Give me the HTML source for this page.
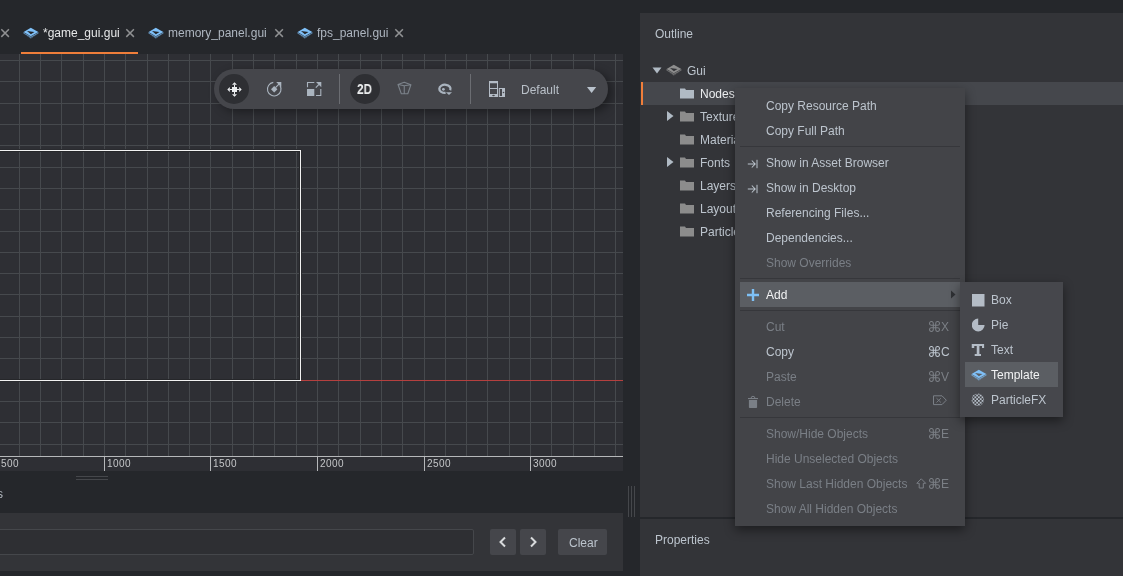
<!DOCTYPE html>
<html><head><meta charset="utf-8">
<style>
*{box-sizing:border-box;margin:0;padding:0}
html,body{width:1123px;height:576px;overflow:hidden;background:#25272b;font-family:"Liberation Sans",sans-serif;}
.a{position:absolute}
.t{position:absolute;white-space:pre;font-size:12px;line-height:14px;will-change:transform}
#canvas{left:0;top:54px;width:623px;height:402px;background:#2e2f34;overflow:hidden}
#ruler{left:0;top:456px;width:623px;height:15px;background:#2e2f34;border-top:1px solid #b6b8ba}
.tick{position:absolute;top:0;width:1px;height:14px;background:#b6b8ba}
.rl{position:absolute;will-change:transform;top:2px;font-size:10px;line-height:10px;color:#c4c6c8;letter-spacing:0.45px}
#rp{left:640px;top:13px;width:483px;height:504px;background:#333438}
#pp{left:640px;top:519px;width:483px;height:57px;background:#333438}
.row{position:absolute;left:0;width:483px;height:23px}
.menu{position:absolute;background:#434448;box-shadow:0 4px 10px rgba(0,0,0,0.45)}
.mi{position:absolute;will-change:transform;left:31px;font-size:12px;line-height:14px;color:#bcc4cd;white-space:pre}
.dis{color:#7a7f86}
.sep{position:absolute;left:5px;width:220px;height:1px;background:#36373b}
.sc{position:absolute;will-change:transform;font-size:12px;line-height:14px;color:#bcc4cd;white-space:pre;text-align:right}
</style></head><body>

<!-- tabs -->
<div class="a" style="left:0;top:0;width:640px;height:54px;background:#25272b"></div>
<svg class="a" style="left:0px;top:28px" width="10" height="10" viewBox="0 0 10 10"><path d="M1.3 1.3L8.9 8.9M8.9 1.3L1.3 8.9" stroke="#8f9092" stroke-width="1.5"/></svg>

<svg class="a" style="left:23px;top:27px" width="16" height="12" viewBox="0 0 16 12"><path d="M7.8 0.7L15.3 5V6.6L7.8 11.5L0.6 6.6V5Z" fill="#7fc0f8"/><path d="M0.6 5.4L7.8 9.6L15.3 5.4M0.9 6.9L7.8 11L15 6.9" stroke="#25272b" stroke-width="0.65" fill="none"/><path d="M4 4.1L11.5 5.1L7.9 7.2Z" fill="#25272b"/></svg>
<div class="t" style="left:43px;top:26px;color:#e6e7e8">*game_gui.gui</div>
<svg class="a" style="left:125px;top:28px" width="10" height="10" viewBox="0 0 10 10"><path d="M1.3 1.3L8.9 8.9M8.9 1.3L1.3 8.9" stroke="#8f9092" stroke-width="1.5"/></svg>
<div class="a" style="left:21px;top:52px;width:117px;height:2px;background:#f07e3a"></div>

<svg class="a" style="left:148px;top:27px" width="16" height="12" viewBox="0 0 16 12"><path d="M7.8 0.7L15.3 5V6.6L7.8 11.5L0.6 6.6V5Z" fill="#7fc0f8"/><path d="M0.6 5.4L7.8 9.6L15.3 5.4M0.9 6.9L7.8 11L15 6.9" stroke="#25272b" stroke-width="0.65" fill="none"/><path d="M4 4.1L11.5 5.1L7.9 7.2Z" fill="#25272b"/></svg>
<div class="t" style="left:168px;top:26px;color:#aeb6c0">memory_panel.gui</div>
<svg class="a" style="left:274px;top:28px" width="10" height="10" viewBox="0 0 10 10"><path d="M1.3 1.3L8.9 8.9M8.9 1.3L1.3 8.9" stroke="#8f9092" stroke-width="1.5"/></svg>

<svg class="a" style="left:297px;top:27px" width="16" height="12" viewBox="0 0 16 12"><path d="M7.8 0.7L15.3 5V6.6L7.8 11.5L0.6 6.6V5Z" fill="#7fc0f8"/><path d="M0.6 5.4L7.8 9.6L15.3 5.4M0.9 6.9L7.8 11L15 6.9" stroke="#25272b" stroke-width="0.65" fill="none"/><path d="M4 4.1L11.5 5.1L7.9 7.2Z" fill="#25272b"/></svg>
<div class="t" style="left:317px;top:26px;color:#aeb6c0">fps_panel.gui</div>
<svg class="a" style="left:394px;top:28px" width="10" height="10" viewBox="0 0 10 10"><path d="M1.3 1.3L8.9 8.9M8.9 1.3L1.3 8.9" stroke="#8f9092" stroke-width="1.5"/></svg>

<!-- canvas -->
<div id="canvas" class="a">
<svg width="623" height="402" style="position:absolute;left:0;top:0" shape-rendering="crispEdges">
<path fill="#46494d" d="M19 0h1v402h-1zM40 0h1v402h-1zM61 0h1v402h-1zM83 0h1v402h-1zM104 0h1v402h-1zM125 0h1v402h-1zM147 0h1v402h-1zM168 0h1v402h-1zM189 0h1v402h-1zM210 0h1v402h-1zM232 0h1v402h-1zM253 0h1v402h-1zM274 0h1v402h-1zM296 0h1v402h-1zM317 0h1v402h-1zM338 0h1v402h-1zM360 0h1v402h-1zM381 0h1v402h-1zM402 0h1v402h-1zM424 0h1v402h-1zM445 0h1v402h-1zM466 0h1v402h-1zM487 0h1v402h-1zM509 0h1v402h-1zM530 0h1v402h-1zM551 0h1v402h-1zM573 0h1v402h-1zM594 0h1v402h-1zM615 0h1v402h-1z"/><path fill="#46494d" d="M0 390h623v1h-623zM0 368h623v1h-623zM0 347h623v1h-623zM0 326h623v1h-623zM0 304h623v1h-623zM0 283h623v1h-623zM0 262h623v1h-623zM0 240h623v1h-623zM0 219h623v1h-623zM0 198h623v1h-623zM0 177h623v1h-623zM0 155h623v1h-623zM0 134h623v1h-623zM0 113h623v1h-623zM0 91h623v1h-623zM0 70h623v1h-623zM0 49h623v1h-623zM0 27h623v1h-623zM0 6h623v1h-623z"/>
<!-- red x axis -->
<!-- white rect with dark outline -->
<path d="M0 95H302V328H0V327H301V96H0Z" fill="#2a2b2f"/>
<path d="M0 97H300V326H0V325H299V98H0Z" fill="#26272a"/>
<rect x="301" y="326" width="322" height="1" fill="#b5403f"/>
<path d="M0 96H301V327H0V326H300V97H0Z" fill="#f2f2f2"/>
</svg>

<!-- toolbar pill -->
<div class="a" style="left:214px;top:15px;width:394px;height:40px;border-radius:20px;background:#45464b;box-shadow:4px 3px 10px rgba(0,0,0,0.38)"></div>
<div class="a" style="left:219px;top:20px;width:30px;height:30px;border-radius:15px;background:#2e2f33"></div>
<svg class="a" style="left:225px;top:26px" width="18" height="18" viewBox="0 0 18 18" fill="#eceef0"><rect x="7" y="7" width="5" height="5"/><path d="M9.5 2.3L12 4.8H7Z M9.5 16.7L12 14.2H7Z M2.3 9.5L4.8 7V12Z M16.7 9.5L14.2 7V12Z"/><rect x="9" y="4.8" width="1" height="2.2"/><rect x="9" y="12" width="1" height="2.2"/><rect x="4.8" y="9" width="2.2" height="1"/><rect x="12" y="9" width="2.2" height="1"/></svg>
<svg class="a" style="left:265px;top:26px" width="18" height="18" viewBox="0 0 18 18"><path d="M8.3 2.4A6.8 6.8 0 1 0 14.9 5.4" stroke="#aab4bf" stroke-width="1.1" fill="none"/><path d="M9.2 5.9L12.4 9.2L9.2 12.4L6 9.2Z" fill="#aab4bf"/><path d="M11.2 2H16.3V7Z" fill="#aab4bf"/><path d="M10.5 7.6L14 4.1" stroke="#aab4bf" stroke-width="1.2"/></svg>
<svg class="a" style="left:305px;top:26px" width="18" height="18" viewBox="0 0 18 18"><rect x="2" y="9" width="7.3" height="7" fill="#aab4bf"/><path d="M2.5 7.3V2.5H9.3M11 15.5H15.8V8.9" stroke="#aab4bf" stroke-width="1.1" fill="none"/><path d="M11 2H16.3V7.2Z" fill="#aab4bf"/><path d="M10.8 7.6L14 4.4" stroke="#aab4bf" stroke-width="1.2"/></svg>
<div class="a" style="left:339px;top:20px;width:1px;height:30px;background:#6b6d72"></div>
<div class="a" style="left:350px;top:20px;width:30px;height:30px;border-radius:15px;background:#2e2f33"></div>
<div class="t" style="left:357px;top:27px;font-size:14px;line-height:16px;font-weight:bold;color:#eceeef;transform:scaleX(0.84);transform-origin:0 0">2D</div>
<svg class="a" style="left:395px;top:26px" width="18" height="18" viewBox="0 0 18 18"><path d="M3 4.5L9.25 2.2L15.9 4.7L12.8 13.7H6.3Z M3 4.5L9.25 5.8L15.9 4.7 M9.25 5.8V13.7" stroke="#7c838b" stroke-width="1.1" fill="none" stroke-linejoin="round"/></svg>
<svg class="a" style="left:435px;top:26px" width="18" height="18" viewBox="0 0 18 18"><path d="M10.6 12.9A5.6 4.1 0 1 1 15.2 10.2" stroke="#aab4bf" stroke-width="2.3" fill="none"/><circle cx="8.4" cy="9.3" r="1.4" fill="#aab4bf"/><path d="M10.9 12.2H17L14 14.9Z" fill="#aab4bf"/></svg>
<div class="a" style="left:470px;top:20px;width:1px;height:30px;background:#6b6d72"></div>
<svg class="a" style="left:488px;top:26px" width="18" height="18" viewBox="0 0 18 18" fill="#b4bcc6"><path fill-rule="evenodd" d="M1 1H10V17H1Z M2 3.3V13.9H9V3.3Z"/><rect x="2" y="8" width="7" height="1"/><ellipse cx="5.5" cy="15.5" rx="1.3" ry="0.7" fill="#45464b"/><path fill-rule="evenodd" d="M10.8 8H17V17H10.8Z M11.8 9V16H14V9Z"/><circle cx="15.5" cy="12.5" r="0.8" fill="#45464b"/></svg>
<div class="t" style="left:521px;top:29px;color:#b9c0c8">Default</div>
<svg class="a" style="left:587px;top:33px" width="10" height="7" viewBox="0 0 10 7"><path d="M0 0H9.2L4.6 6Z" fill="#b9c2cc"/></svg>
</div>

<!-- ruler -->
<div id="ruler" class="a">
<div class="tick" style="left:104px"></div>
<div class="tick" style="left:210px"></div>
<div class="tick" style="left:317px"></div>
<div class="tick" style="left:424px"></div>
<div class="tick" style="left:530px"></div>
<div class="rl" style="left:1px">500</div>
<div class="rl" style="left:107px">1000</div>
<div class="rl" style="left:213px">1500</div>
<div class="rl" style="left:320px">2000</div>
<div class="rl" style="left:427px">2500</div>
<div class="rl" style="left:533px">3000</div>
</div>

<!-- splitter & bottom panel -->
<div class="a" style="left:76px;top:476px;width:32px;height:1px;background:#45474b"></div>
<div class="a" style="left:76px;top:479px;width:32px;height:1px;background:#45474b"></div>
<div class="t" style="left:-9px;top:487px;color:#b4bac1">ss</div>
<div class="a" style="left:0;top:513px;width:623px;height:58px;background:#333438"></div>
<div class="a" style="left:-5px;top:529px;width:479px;height:26px;background:#2e2f33;border:1px solid #45474b;border-radius:2px"></div>
<div class="a" style="left:490px;top:529px;width:26px;height:26px;background:#45464b;border-radius:2px"></div>
<svg class="a" style="left:497px;top:536px" width="12" height="12" viewBox="0 0 12 12"><path d="M8 1.5L3.5 6L8 10.5" stroke="#d8dadc" stroke-width="2" fill="none"/></svg>
<div class="a" style="left:520px;top:529px;width:26px;height:26px;background:#45464b;border-radius:2px"></div>
<svg class="a" style="left:527px;top:536px" width="12" height="12" viewBox="0 0 12 12"><path d="M4 1.5L8.5 6L4 10.5" stroke="#d8dadc" stroke-width="2" fill="none"/></svg>
<div class="a" style="left:558px;top:529px;width:49px;height:26px;background:#45464b;border-radius:2px"></div>
<div class="t" style="left:569px;top:536px;color:#bcc4cd">Clear</div>
<div class="a" style="left:628px;top:486px;width:1px;height:31px;background:#45474b"></div>
<div class="a" style="left:631px;top:486px;width:1px;height:31px;background:#45474b"></div>
<div class="a" style="left:634px;top:486px;width:1px;height:31px;background:#45474b"></div>

<!-- right panel -->
<div id="rp" class="a">
<div class="t" style="left:15px;top:14px;color:#bcc4cd">Outline</div>
<svg class="a" style="left:12px;top:54px" width="10" height="7" viewBox="0 0 10 7"><path d="M0.5 0.5H9.5L5 6.5Z" fill="#b0bac4"/></svg>
<svg class="a" style="left:26px;top:51px" width="16" height="12" viewBox="0 0 16 12"><path d="M7.8 0.7L15.3 5V6.6L7.8 11.5L0.6 6.6V5Z" fill="#8e8e8e"/><path d="M0.6 5.4L7.8 9.6L15.3 5.4M0.9 6.9L7.8 11L15 6.9" stroke="#333438" stroke-width="0.65" fill="none"/><path d="M4 4.1L11.5 5.1L7.9 7.2Z" fill="#333438"/></svg>
<div class="t" style="left:47px;top:51px;color:#bcc4cd">Gui</div>
<div class="a" style="left:1px;top:69px;width:482px;height:23px;background:#45474c"></div>
<div class="a" style="left:1px;top:69px;width:2px;height:23px;background:#f07e3a"></div>
<svg class="a" style="left:40px;top:75px" width="14" height="11" viewBox="0 0 14 11"><path d="M0 0.5H5L6 2H14V10.5H0Z" fill="#b0bac4"/></svg>
<div class="t" style="left:60px;top:74px;color:#eceef0">Nodes</div>
<svg class="a" style="left:40px;top:98px" width="14" height="11" viewBox="0 0 14 11"><path d="M0 0.5H5L6 2H14V10.5H0Z" fill="#8c8c8c"/></svg>
<div class="t" style="left:60px;top:97px;color:#bcc4cd">Textures</div>
<svg class="a" style="left:27px;top:98px" width="7" height="10" viewBox="0 0 7 10"><path d="M0 0L6.5 5L0 10Z" fill="#b0bac4"/></svg>
<svg class="a" style="left:40px;top:121px" width="14" height="11" viewBox="0 0 14 11"><path d="M0 0.5H5L6 2H14V10.5H0Z" fill="#8c8c8c"/></svg>
<div class="t" style="left:60px;top:120px;color:#bcc4cd">Materials</div>
<svg class="a" style="left:40px;top:144px" width="14" height="11" viewBox="0 0 14 11"><path d="M0 0.5H5L6 2H14V10.5H0Z" fill="#8c8c8c"/></svg>
<div class="t" style="left:60px;top:143px;color:#bcc4cd">Fonts</div>
<svg class="a" style="left:27px;top:144px" width="7" height="10" viewBox="0 0 7 10"><path d="M0 0L6.5 5L0 10Z" fill="#b0bac4"/></svg>
<svg class="a" style="left:40px;top:167px" width="14" height="11" viewBox="0 0 14 11"><path d="M0 0.5H5L6 2H14V10.5H0Z" fill="#8c8c8c"/></svg>
<div class="t" style="left:60px;top:166px;color:#bcc4cd">Layers</div>
<svg class="a" style="left:40px;top:190px" width="14" height="11" viewBox="0 0 14 11"><path d="M0 0.5H5L6 2H14V10.5H0Z" fill="#8c8c8c"/></svg>
<div class="t" style="left:60px;top:189px;color:#bcc4cd">Layouts</div>
<svg class="a" style="left:40px;top:213px" width="14" height="11" viewBox="0 0 14 11"><path d="M0 0.5H5L6 2H14V10.5H0Z" fill="#8c8c8c"/></svg>
<div class="t" style="left:60px;top:212px;color:#bcc4cd">Particles</div>
</div>
<div id="pp" class="a">
<div class="t" style="left:15px;top:14px;color:#bcc4cd">Properties</div>
</div>

<div class="menu" style="left:735px;top:88px;width:230px;height:438px">
<div class="mi" style="top:11px">Copy Resource Path</div>
<div class="mi" style="top:36px">Copy Full Path</div>
<div class="sep" style="top:58px"></div>
<div class="mi" style="top:68px">Show in Asset Browser</div>
<svg class="a" style="left:12px;top:71px" width="11" height="10" viewBox="0 0 11 10"><path d="M0.8 5H8M4.8 1.5L8.2 5L4.8 8.5" stroke="#bcc4cd" stroke-width="1.05" fill="none"/><path d="M10 0.8V9.2" stroke="#bcc4cd" stroke-width="1"/></svg>
<div class="mi" style="top:93px">Show in Desktop</div>
<svg class="a" style="left:12px;top:96px" width="11" height="10" viewBox="0 0 11 10"><path d="M0.8 5H8M4.8 1.5L8.2 5L4.8 8.5" stroke="#bcc4cd" stroke-width="1.05" fill="none"/><path d="M10 0.8V9.2" stroke="#bcc4cd" stroke-width="1"/></svg>
<div class="mi" style="top:118px">Referencing Files...</div>
<div class="mi" style="top:143px">Dependencies...</div>
<div class="mi dis" style="top:168px">Show Overrides</div>
<div class="sep" style="top:190px"></div>
<div class="a" style="left:5px;top:194px;width:220px;height:25px;background:#5b5e63"></div>
<svg class="a" style="left:11px;top:200px" width="14" height="14" viewBox="0 0 14 14"><path d="M7 1V13M1 7H13" stroke="#7ec0f5" stroke-width="2.4"/></svg>
<div class="mi" style="top:200px;color:#f2f3f4">Add</div>
<svg class="a" style="left:216px;top:202px" width="5" height="9" viewBox="0 0 5 9"><path d="M0 0.5L4.5 4.5L0 8.5Z" fill="#2e3034"/></svg>
<div class="sep" style="top:222px"></div>
<div class="mi dis" style="top:232px">Cut</div>
<svg class="a" style="left:194px;top:233px" width="11" height="11" viewBox="0 0 11 11"><path d="M4.3 4.3V2.4A1.9 1.9 0 1 0 2.4 4.3H8.6A1.9 1.9 0 1 0 6.7 2.4V8.6A1.9 1.9 0 1 0 8.6 6.7H2.4A1.9 1.9 0 1 0 4.3 8.6Z" stroke="#7b7f85" stroke-width="1.05" fill="none"/></svg><div class="sc" style="left:206px;top:232px;color:#7b7f85">X</div>
<div class="mi" style="top:257px">Copy</div>
<svg class="a" style="left:194px;top:258px" width="11" height="11" viewBox="0 0 11 11"><path d="M4.3 4.3V2.4A1.9 1.9 0 1 0 2.4 4.3H8.6A1.9 1.9 0 1 0 6.7 2.4V8.6A1.9 1.9 0 1 0 8.6 6.7H2.4A1.9 1.9 0 1 0 4.3 8.6Z" stroke="#bcc4cd" stroke-width="1.05" fill="none"/></svg><div class="sc" style="left:206px;top:257px;color:#bcc4cd">C</div>
<div class="mi dis" style="top:282px">Paste</div>
<svg class="a" style="left:194px;top:283px" width="11" height="11" viewBox="0 0 11 11"><path d="M4.3 4.3V2.4A1.9 1.9 0 1 0 2.4 4.3H8.6A1.9 1.9 0 1 0 6.7 2.4V8.6A1.9 1.9 0 1 0 8.6 6.7H2.4A1.9 1.9 0 1 0 4.3 8.6Z" stroke="#7b7f85" stroke-width="1.05" fill="none"/></svg><div class="sc" style="left:206px;top:282px;color:#7b7f85">V</div>
<div class="mi dis" style="top:307px">Delete</div>
<svg class="a" style="left:13px;top:307px" width="11" height="14" viewBox="0 0 11 14"><path d="M0 3H10V4.1H0Z" fill="#7a7f86"/><path d="M3.1 3.2A1.9 1.9 0 0 1 6.9 3.2" stroke="#7a7f86" stroke-width="1" fill="none"/><path d="M0.9 5H9.1V12.2Q9.1 13 8.3 13H1.7Q0.9 13 0.9 12.2Z" fill="#7a7f86"/></svg>
<svg class="a" style="left:197px;top:396px;top:307px" width="15" height="11" viewBox="0 0 15 11"><path d="M1.5 0.8H10L14.3 5.2L10 9.6H1.5Z" stroke="#7a7f86" stroke-width="1" fill="none"/><path d="M4.5 3.2L8.9 7.5M8.9 3.2L4.5 7.5" stroke="#7a7f86" stroke-width="0.9"/></svg>
<div class="sep" style="top:329px"></div>
<div class="mi dis" style="top:339px">Show/Hide Objects</div>
<svg class="a" style="left:194px;top:340px" width="11" height="11" viewBox="0 0 11 11"><path d="M4.3 4.3V2.4A1.9 1.9 0 1 0 2.4 4.3H8.6A1.9 1.9 0 1 0 6.7 2.4V8.6A1.9 1.9 0 1 0 8.6 6.7H2.4A1.9 1.9 0 1 0 4.3 8.6Z" stroke="#7b7f85" stroke-width="1.05" fill="none"/></svg><div class="sc" style="left:206px;top:339px;color:#7b7f85">E</div>
<div class="mi dis" style="top:364px">Hide Unselected Objects</div>
<div class="mi dis" style="top:389px">Show Last Hidden Objects</div>
<svg class="a" style="left:194px;top:390px" width="11" height="11" viewBox="0 0 11 11"><path d="M4.3 4.3V2.4A1.9 1.9 0 1 0 2.4 4.3H8.6A1.9 1.9 0 1 0 6.7 2.4V8.6A1.9 1.9 0 1 0 8.6 6.7H2.4A1.9 1.9 0 1 0 4.3 8.6Z" stroke="#7b7f85" stroke-width="1.05" fill="none"/></svg><svg class="a" style="left:181px;top:390px" width="11" height="11" viewBox="0 0 11 11"><path d="M5.25 0.8L9.7 5.3H7.3V10H3.2V5.3H0.8Z" stroke="#7b7f85" stroke-width="1" fill="none" stroke-linejoin="miter"/></svg><div class="sc" style="left:206px;top:389px;color:#7b7f85">E</div>
<div class="mi dis" style="top:414px">Show All Hidden Objects</div>
</div>
<div class="menu" style="left:960px;top:282px;width:103px;height:135px;background:#46474c">
<div class="a" style="left:5px;top:80px;width:93px;height:25px;background:#5b5e63"></div>
<div class="mi" style="left:31px;top:11px;color:#bcc4cd">Box</div>
<div class="mi" style="left:31px;top:36px;color:#bcc4cd">Pie</div>
<div class="mi" style="left:31px;top:61px;color:#bcc4cd">Text</div>
<div class="mi" style="left:31px;top:86px;color:#f2f3f4">Template</div>
<div class="mi" style="left:31px;top:111px;color:#bcc4cd">ParticleFX</div>
<svg class="a" style="left:12px;top:12px" width="13" height="13" viewBox="0 0 13 13"><rect x="0" y="0" width="12.5" height="12.5" fill="#b4bcc6"/></svg>
<svg class="a" style="left:12px;top:36px" width="14" height="14" viewBox="0 0 14 14"><path d="M6.2 0.6A6.4 6.4 0 1 0 12.6 7H6.2Z" fill="#b4bcc6"/></svg>
<svg class="a" style="left:11px;top:61px" width="14" height="14" viewBox="0 0 14 14"><path d="M0.75 0.9H13.1V5H11V2.9H8.4V10.9H10V13.1H3.7V10.9H5.75V2.9H3.25V5H0.75Z" fill="#b4bcc6"/></svg>
<svg class="a" style="left:11px;top:87px" width="16" height="12" viewBox="0 0 16 12"><path d="M7.8 0.7L15.3 5V6.6L7.8 11.5L0.6 6.6V5Z" fill="#7fc0f8"/><path d="M0.6 5.4L7.8 9.6L15.3 5.4M0.9 6.9L7.8 11L15 6.9" stroke="#5b5e63" stroke-width="0.65" fill="none"/><path d="M4 4.1L11.5 5.1L7.9 7.2Z" fill="#5b5e63"/></svg>
<svg class="a" style="left:11px;top:111px" width="14" height="14" viewBox="0 0 14 14"><clipPath id="cc"><circle cx="7" cy="7" r="6.3"/></clipPath><g clip-path="url(#cc)" fill="#b4bcc6" transform="translate(-0.2,-0.2)"><rect x="0.00" y="0.00" width="1.8" height="1.8"/><rect x="3.60" y="0.00" width="1.8" height="1.8"/><rect x="7.20" y="0.00" width="1.8" height="1.8"/><rect x="10.80" y="0.00" width="1.8" height="1.8"/><rect x="1.80" y="1.80" width="1.8" height="1.8"/><rect x="5.40" y="1.80" width="1.8" height="1.8"/><rect x="9.00" y="1.80" width="1.8" height="1.8"/><rect x="12.60" y="1.80" width="1.8" height="1.8"/><rect x="0.00" y="3.60" width="1.8" height="1.8"/><rect x="3.60" y="3.60" width="1.8" height="1.8"/><rect x="7.20" y="3.60" width="1.8" height="1.8"/><rect x="10.80" y="3.60" width="1.8" height="1.8"/><rect x="1.80" y="5.40" width="1.8" height="1.8"/><rect x="5.40" y="5.40" width="1.8" height="1.8"/><rect x="9.00" y="5.40" width="1.8" height="1.8"/><rect x="12.60" y="5.40" width="1.8" height="1.8"/><rect x="0.00" y="7.20" width="1.8" height="1.8"/><rect x="3.60" y="7.20" width="1.8" height="1.8"/><rect x="7.20" y="7.20" width="1.8" height="1.8"/><rect x="10.80" y="7.20" width="1.8" height="1.8"/><rect x="1.80" y="9.00" width="1.8" height="1.8"/><rect x="5.40" y="9.00" width="1.8" height="1.8"/><rect x="9.00" y="9.00" width="1.8" height="1.8"/><rect x="12.60" y="9.00" width="1.8" height="1.8"/><rect x="0.00" y="10.80" width="1.8" height="1.8"/><rect x="3.60" y="10.80" width="1.8" height="1.8"/><rect x="7.20" y="10.80" width="1.8" height="1.8"/><rect x="10.80" y="10.80" width="1.8" height="1.8"/><rect x="1.80" y="12.60" width="1.8" height="1.8"/><rect x="5.40" y="12.60" width="1.8" height="1.8"/><rect x="9.00" y="12.60" width="1.8" height="1.8"/><rect x="12.60" y="12.60" width="1.8" height="1.8"/></g></svg>
</div>
</body></html>
